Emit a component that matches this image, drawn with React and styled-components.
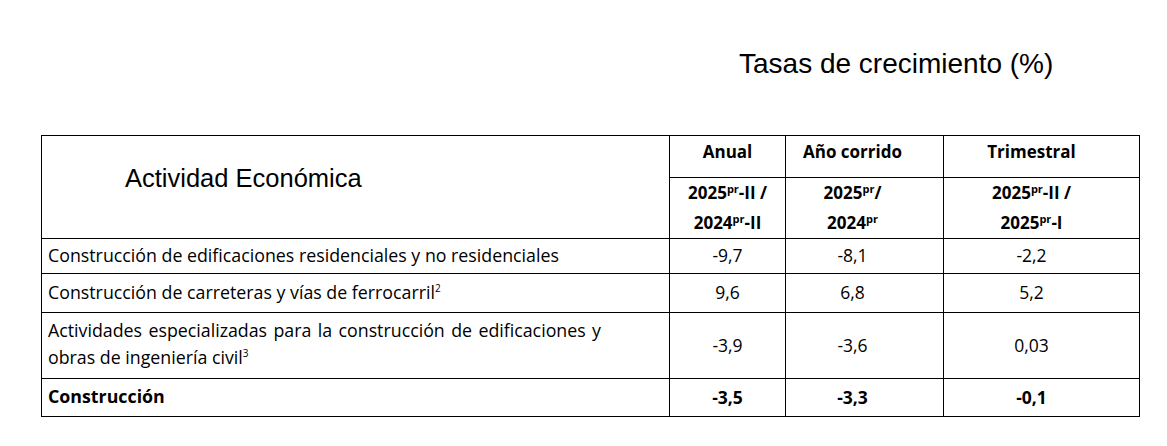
import React from 'react'
import styled, { createGlobalStyle } from 'styled-components'

const GlobalStyle = createGlobalStyle`
    html, body {
        margin: 0;
        padding: 0;
        background: #fff;
    }
`

const Page = styled.div`
    width: 1167px;
    height: 446px;
    padding: 46px 0 0 41px;
    box-sizing: border-box;
    font-family: "Open Sans", "Noto Sans", sans-serif;
    color: #000;
`

const Title = styled.h2`
    margin: 0 0 0 698px;
    height: 89px;
    font-family: "Liberation Sans", Arial, sans-serif;
    font-weight: normal;
    font-size: 28px;
    line-height: 36px;
`

const Table = styled.table`
    border-collapse: collapse;
    table-layout: fixed;
    width: 1098px;

    td, th {
        border: 1px solid #000;
        padding: 0;
    }
`

const HeadRow = styled.tr`
    height: ${p => p.$h}px;
`

const ActivityHead = styled.th`
    text-align: left;
    vertical-align: top;
    font-family: "Liberation Sans", Arial, sans-serif;
    font-weight: normal;
    font-size: 25.5px;
    line-height: 30px;
    padding: 27px 0 0 83px !important;
`

const ColHead = styled.th`
    font-size: 17px;
    font-weight: bold;
    line-height: ${p => p.$lh || 22}px;
    text-align: center;
    vertical-align: top;
    padding: ${p => p.$pt || 0}px ${p => p.$pr || 0}px 0 0 !important;
`

const Row = styled.tr`
    height: ${p => p.$h}px;
    font-weight: ${p => (p.$bold ? 'bold' : 'normal')};
`

const Label = styled.td`
    font-size: 17.8px;
    line-height: 27px;
    padding: 0 68px 2px 6px !important;
    text-align: left;
    vertical-align: middle;
    white-space: nowrap;
`

const Value = styled.td`
    font-size: 17.5px;
    text-align: center;
    vertical-align: middle;
    padding: 0 ${p => p.$pr || 0}px 2px 0 !important;
`

const Pr = styled.sup`
    font-size: 11px;
    line-height: 0;
    vertical-align: 6px;
`

const Note = styled.sup`
    font-size: 10px;
    line-height: 0;
    vertical-align: 7px;
`

const Spread = styled.span`
    display: block;
    text-align: justify;
    text-align-last: justify;
    margin-top: -2px;
`

const rows = [
    { label: 'Construcción de edificaciones residenciales y no residenciales', v: ['-9,7', '-8,1', '-2,2'], h: 35 },
    { label: <>Construcción de carreteras y vías de ferrocarril<Note>2</Note></>, v: ['9,6', '6,8', '5,2'], h: 39 },
    {
        label: <>
            <Spread>Actividades especializadas para la construcción de edificaciones y</Spread>
            obras de ingeniería civil<Note>3</Note>
        </>,
        v: ['-3,9', '-3,6', '0,03'], h: 66,
    },
    { label: 'Construcción', v: ['-3,5', '-3,3', '-0,1'], h: 38, bold: true },
]

const pads = [0, 24, 20]

const App = () => {
    return (
        <>
            <GlobalStyle />
            <Page>
                <Title>Tasas de crecimiento (%)</Title>
                <Table>
                    <colgroup>
                        <col style={{ width: 628 }} />
                        <col style={{ width: 116 }} />
                        <col style={{ width: 158 }} />
                        <col style={{ width: 196 }} />
                    </colgroup>
                    <thead>
                        <HeadRow $h={42}>
                            <ActivityHead rowSpan={2}>Actividad Económica</ActivityHead>
                            <ColHead $pt={5}>Anual</ColHead>
                            <ColHead $pt={5} $pr={24}>Año corrido</ColHead>
                            <ColHead $pt={5} $pr={20}>Trimestral</ColHead>
                        </HeadRow>
                        <HeadRow $h={61}>
                            <ColHead $lh={30} $pt={0}>2025<Pr>pr</Pr>-II /<br />2024<Pr>pr</Pr>-II</ColHead>
                            <ColHead $lh={30} $pt={0} $pr={24}>2025<Pr>pr</Pr>/<br />2024<Pr>pr</Pr></ColHead>
                            <ColHead $lh={30} $pt={0} $pr={20}>2025<Pr>pr</Pr>-II /<br />2025<Pr>pr</Pr>-I</ColHead>
                        </HeadRow>
                    </thead>
                    <tbody>
                        {rows.map((r, i) => (
                            <Row key={i} $h={r.h} $bold={r.bold}>
                                <Label>{r.label}</Label>
                                {r.v.map((v, j) => (
                                    <Value key={j} $pr={pads[j]}>{v}</Value>
                                ))}
                            </Row>
                        ))}
                    </tbody>
                </Table>
            </Page>
        </>
    )
}

export default App
